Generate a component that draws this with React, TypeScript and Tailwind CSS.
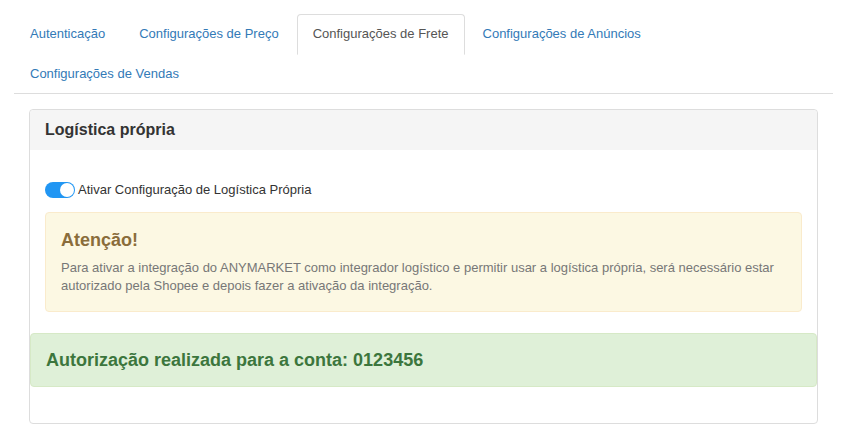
const tabs = [
  'Autenticação',
  'Configurações de Preço',
  'Configurações de Frete',
  'Configurações de Anúncios',
  'Configurações de Vendas',
]

const active = 'Configurações de Frete'

export default function App() {
  return (
    <div
      className="min-h-screen bg-white pt-[14px] pl-[14px] pr-[12px] text-[13px] text-[#333]"
      style={{ fontFamily: '"Liberation Sans", Arial, sans-serif' }}
    >
      <ul className="flex flex-wrap border-b border-[#ddd]">
        {tabs.map((t) => (
          <li key={t} className="-mb-px mr-[2px]">
            {t === active ? (
              <span className="block rounded-t-[4px] border border-[#ddd] border-b-transparent bg-white px-[15px] py-[10px] leading-[18.5px] text-[#555]">
                {t}
              </span>
            ) : (
              <a className="block border border-transparent px-[15px] py-[10px] leading-[18.5px] text-[#337ab7]">
                {t}
              </a>
            )}
          </li>
        ))}
      </ul>

      <div className="px-[15px] pt-[15px]">
        <div className="rounded-[4px] border border-[#ddd] bg-white">
          <div className="rounded-t-[4px] bg-[#f5f5f5] px-[15px] pt-[10px] pb-[10px]">
            <h3 className="text-[16px] font-bold leading-[20px] text-[#333]">Logística própria</h3>
          </div>

          <div className="px-[15px] pt-[30px]">
            <label className="flex items-center gap-[3px] leading-[20px]">
              <span className="relative inline-block h-[16px] w-[30px] rounded-full bg-[#2196f3]">
                <span className="absolute right-[1px] top-[1px] h-[14px] w-[14px] rounded-full bg-white" />
              </span>
              <span>Ativar Configuração de Logística Própria</span>
            </label>

            <div className="mt-[12px] rounded-[4px] border border-[#faebcc] bg-[#fcf8e3] px-[15px] pt-[17px] pb-[16px]">
              <h4 className="text-[18px] font-bold leading-[20px] text-[#8a6d3b]">Atenção!</h4>
              <p className="mt-[9px] text-[13px] leading-[18px] text-[#777]">
                Para ativar a integração do ANYMARKET como integrador logístico e permitir usar a logística própria, será necessário estar autorizado pela Shopee e depois fazer a ativação da integração.
              </p>
            </div>
          </div>

          <div className="mt-[21px] rounded-[4px] border border-[#d6e9c6] bg-[#dff0d8] px-[15px] py-[15px]">
            <h4 className="text-[18px] font-bold leading-[22px] text-[#3c763d]">
              Autorização realizada para a conta: 0123456
            </h4>
          </div>

          <div className="h-[36px]" />
        </div>
      </div>
    </div>
  )
}
